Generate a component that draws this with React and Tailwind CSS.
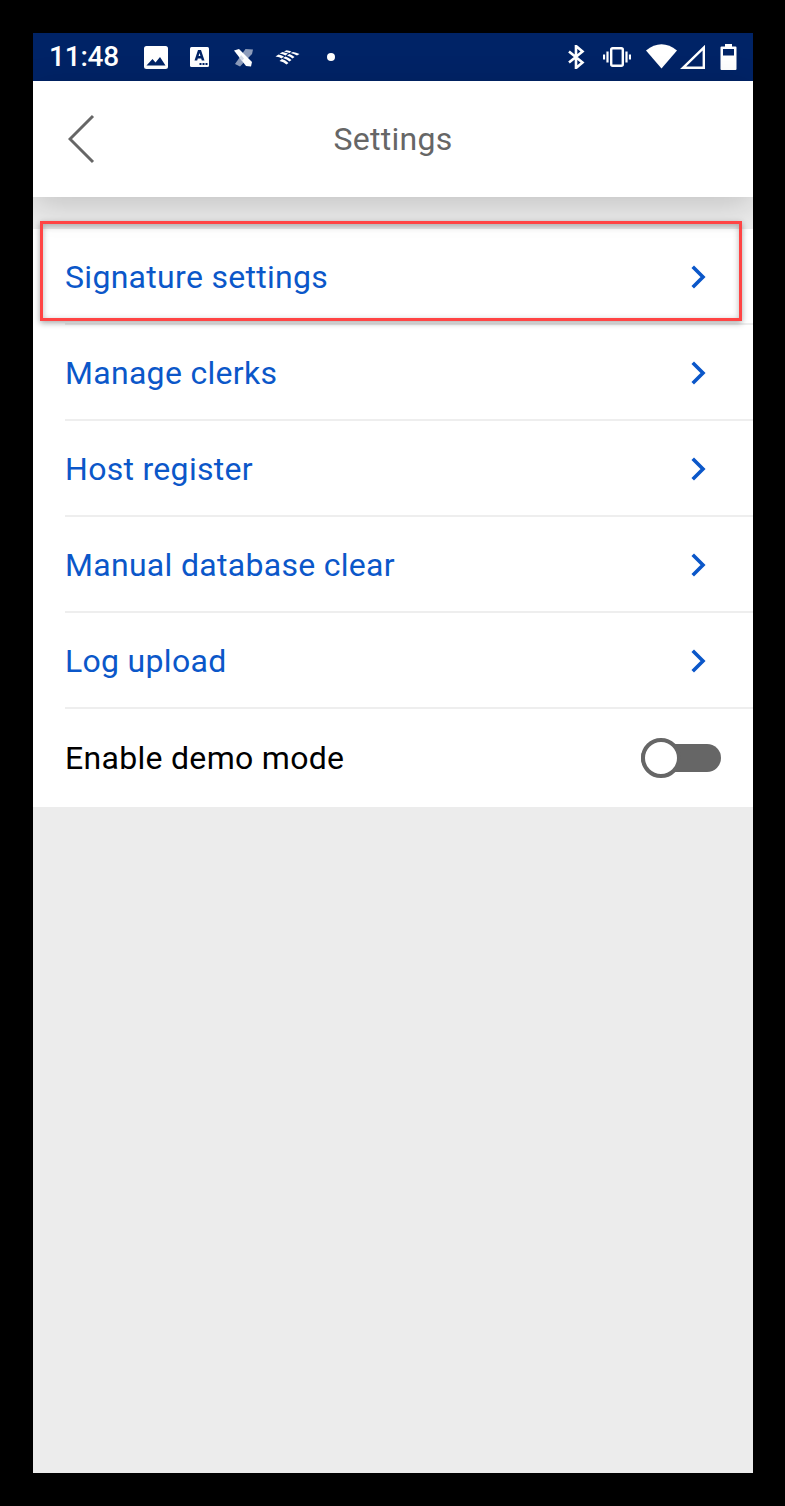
const Chevron = () => (
  <svg width="15" height="24" viewBox="0 0 15 24" fill="none" className="block">
    <path d="M3 3 L12 12 L3 21" stroke="#0b57c9" strokeWidth="3.6" strokeLinecap="square" strokeLinejoin="miter" />
  </svg>
);

const StatusIcons = () => (
  <>
    <svg width="24" height="23" viewBox="0 0 24 23" className="block ml-[1px]">
      <rect x="0" y="0" width="24" height="23" rx="2.5" fill="#fff" />
      <path d="M2.5 19.5 L8.5 13 L11.5 16.5 L16 11 L21.5 19.5 Z" fill="#002366" />
    </svg>
    <svg width="19" height="20" viewBox="0 0 19 20" className="block ml-[22px]">
      <rect x="0" y="0" width="19" height="20" rx="1.5" fill="#fff" />
      <path d="M8 3 H11 L14.5 13.5 H11.8 L11.2 11.5 H7.8 L7.2 13.5 H4.5 Z M8.6 9 H10.4 L9.5 6 Z" fill="#002366" fillRule="evenodd" />
      <rect x="9.5" y="16" width="2" height="2" fill="#002366" />
      <rect x="12.5" y="16" width="2" height="2" fill="#002366" />
      <rect x="15.5" y="16" width="2" height="2" fill="#002366" />
    </svg>
    <svg width="19" height="18" viewBox="0 0 19 18" className="block ml-[25px] mt-[1px]">
      <path d="M11.5 0 L19 0.5 L18 5 L6 17.5 L1 15 Z" fill="#fff" opacity="0.55" />
      <path d="M0 1.5 L5 0 L18 13 L17 17.5 L12 17 Z" fill="#fff" />
      <path d="M7 6 L10 9.5 L8 12 L5.5 9 Z" fill="#d5dbe8" />
    </svg>
    <svg width="25" height="15" viewBox="0 0 25 15" className="block ml-[22px]">
      <path d="M0.5 6.5 Q5 7 6.5 8.5 L9 6.5 Q6 5 3.5 4.5 Z" fill="#fff" />
      <path d="M4.5 3.5 Q8 4 10.5 5.5 L13 3.5 Q10.5 2.5 7.5 2 Z" fill="#fff" />
      <path d="M9 1.5 Q12 2 14.5 3 L16.5 1.5 Q14 0.5 11.5 0.2 Z" fill="#fff" />
      <path d="M4.5 11 Q8.5 11.5 11.5 14.5 L13.5 13 Q10.5 10 7 9 Z" fill="#fff" />
      <path d="M8 8 Q12 9 14.5 11.5 L16.5 10 Q14 7.5 10.5 6.5 Z" fill="#fff" />
      <path d="M12 5.5 Q15.5 6.5 17.5 8.5 L19.5 7 Q17 5 14.5 4 Z" fill="#fff" />
      <path d="M15.5 3 Q19 3.5 22 5.5 L24.5 4 Q21 2.5 18 2 Z" fill="#fff" />
    </svg>
    <div className="w-2 h-2 rounded-full bg-white ml-[27px]" />
  </>
);

const Row = ({ label }) => (
  <div className="h-24 pl-[32px] bg-white">
    <div className="h-full flex items-center justify-between pt-[2px] pr-[47px] border-b-2 border-[#eeeeee]">
      <span className="text-[32px] text-[#0b57c9] tracking-[0.3px]">{label}</span>
      <Chevron />
    </div>
  </div>
);

export default function App() {
  return (
    <div className="w-[785px] h-[1506px] bg-black p-[33px]" style={{ fontFamily: "Roboto, sans-serif" }}>
      <div className="relative w-[720px] h-[1440px] bg-[#ececec] flex flex-col">
        <div className="h-12 bg-[#002366] flex items-center justify-between pl-[16px] pr-[16px] text-white shrink-0">
          <div className="flex items-center">
            <span className="text-[28px] font-medium w-[94px] tracking-[-0.2px]">11:48</span>
            <StatusIcons />
          </div>
          <div className="flex items-center">
            <svg width="17" height="24" viewBox="0 0 17 24" fill="none" className="block">
              <path d="M1 6.5 L14.5 17.5 L8 23 V1 L14.5 6.5 L1 17.5" stroke="#fff" strokeWidth="2.6" />
            </svg>
            <svg width="28" height="20" viewBox="0 0 28 20" fill="none" className="block ml-[18px]">
              <rect x="8.2" y="1.2" width="11.6" height="17.6" rx="1.5" stroke="#fff" strokeWidth="2.4" />
              <path d="M4.5 4.5 V15.5 M1 7.5 V12.5 M23.5 4.5 V15.5 M27 7.5 V12.5" stroke="#fff" strokeWidth="2.2" />
            </svg>
            <svg width="31" height="26" viewBox="0 0 31 26" className="block ml-[15px] -mt-[2px]">
              <path d="M0 7.5 Q15.5 -5 31 7.5 L15.5 25.5 Z" fill="#fff" />
            </svg>
            <svg width="25" height="24" viewBox="0 0 25 24" fill="none" className="block ml-[3px]">
              <path d="M3 22.8 L23.8 2.6 V22.8 Z" stroke="#fff" strokeWidth="2.4" />
            </svg>
            <svg width="17" height="26" viewBox="0 0 17 26" className="block ml-[15px] -mt-[1px]">
              <path d="M5 0 H12 V2.5 H15.5 Q16.5 2.5 16.5 3.5 V25 Q16.5 26 15.5 26 H1.5 Q0.5 26 0.5 25 V3.5 Q0.5 2.5 1.5 2.5 H5 Z" fill="#fff" />
              <rect x="3" y="5" width="11" height="6.5" fill="#002366" />
            </svg>
          </div>
        </div>

        <div className="relative z-10 h-[116px] bg-white flex items-center justify-center shrink-0 shadow-[0_8px_32px_rgba(0,0,0,0.18)]">
          <svg width="28" height="50" viewBox="0 0 28 50" fill="none" className="absolute left-[35px] top-[33px]">
            <path d="M25 2 L2 25 L25 48" stroke="#666666" strokeWidth="3" />
          </svg>
          <span className="text-[32px] text-[#666666] tracking-[0.25px]">Settings</span>
        </div>

        <div className="h-8 shrink-0" />

        <div className="flex flex-col">
          <Row label="Signature settings" />
          <Row label="Manage clerks" />
          <Row label="Host register" />
          <Row label="Manual database clear" />
          <Row label="Log upload" />
          <div className="h-[98px] pl-[32px] pr-[32px] bg-white flex items-center justify-between">
            <span className="text-[32px] text-black tracking-[0.3px]">Enable demo mode</span>
            <div className="relative w-[80px] h-[28px] bg-[#666666] rounded-full">
              <div className="absolute left-0 -top-[6px] w-10 h-10 rounded-full bg-white border-[4.5px] border-[#666666]" />
            </div>
          </div>
        </div>

        <div className="absolute left-[7px] top-[188px] w-[702px] h-[100px] border-[3px] border-[#ff4444] shadow-[0_2px_6px_rgba(0,0,0,0.35),inset_0_2px_6px_rgba(0,0,0,0.28)] z-20" />
      </div>
    </div>
  );
}
